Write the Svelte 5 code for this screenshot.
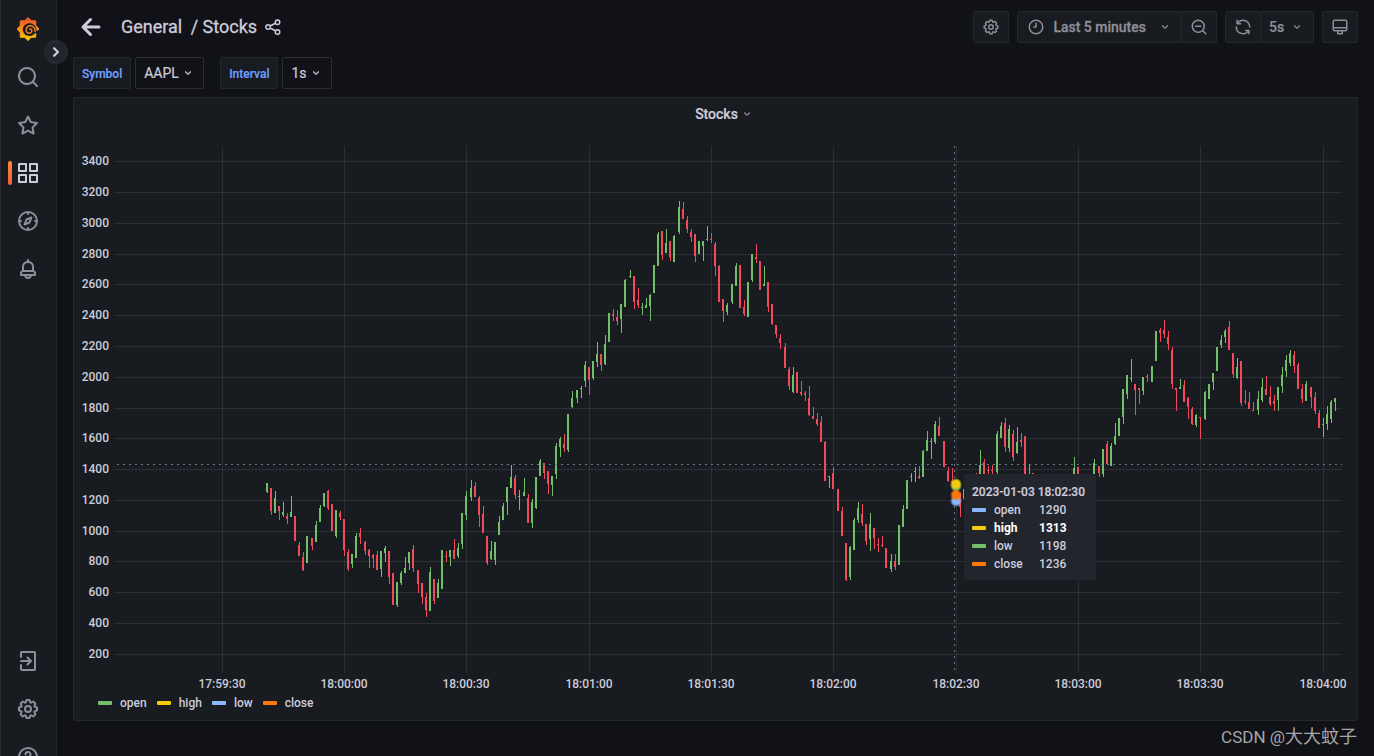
<script>
  const icons = {
    search: 'M21.71,20.29,18,16.61A9,9,0,1,0,16.61,18l3.68,3.68a1,1,0,0,0,1.42,0A1,1,0,0,0,21.71,20.29ZM11,18a7,7,0,1,1,7-7A7,7,0,0,1,11,18Z',
    star: 'M22,9.67A1,1,0,0,0,21.14,9l-5.69-.83L12.9,3a1,1,0,0,0-1.8,0L8.55,8.16,2.86,9a1,1,0,0,0-.81.68,1,1,0,0,0,.25,1l4.13,4-1,5.68A1,1,0,0,0,6.9,21.44L12,18.77l5.1,2.67a.93.93,0,0,0,.46.12,1,1,0,0,0,.59-.19,1,1,0,0,0,.4-1l-1-5.68,4.13-4A1,1,0,0,0,22,9.67Zm-6.15,4a1,1,0,0,0-.29.88l.72,4.2-3.76-2a1.06,1.06,0,0,0-.94,0l-3.76,2,.72-4.2a1,1,0,0,0-.29-.88l-3-3,4.21-.61a1,1,0,0,0,.76-.55L12,5.7l1.88,3.82a1,1,0,0,0,.76.55l4.21.61Z',
    apps: 'M10,13H3a1,1,0,0,0-1,1v7a1,1,0,0,0,1,1h7a1,1,0,0,0,1-1V14A1,1,0,0,0,10,13ZM9,20H4V15H9ZM21,2H14a1,1,0,0,0-1,1v7a1,1,0,0,0,1,1h7a1,1,0,0,0,1-1V3A1,1,0,0,0,21,2ZM20,9H15V4h5Zm1,4H14a1,1,0,0,0-1,1v7a1,1,0,0,0,1,1h7a1,1,0,0,0,1-1V14A1,1,0,0,0,21,13Zm-1,7H15V15h5ZM10,2H3A1,1,0,0,0,2,3v7a1,1,0,0,0,1,1h7a1,1,0,0,0,1-1V3A1,1,0,0,0,10,2ZM9,9H4V4H9Z',
    bell: 'M18,13.18V10a6,6,0,0,0-5-5.91V3a1,1,0,0,0-2,0V4.09A6,6,0,0,0,6,10v3.18A3,3,0,0,0,4,16v2a1,1,0,0,0,1,1H8.14a4,4,0,0,0,7.72,0H19a1,1,0,0,0,1-1V16A3,3,0,0,0,18,13.18ZM8,10a4,4,0,0,1,8,0v3H8Zm4,10a2,2,0,0,1-1.72-1h3.44A2,2,0,0,1,12,20Zm6-3H6V16a1,1,0,0,1,1-1H17a1,1,0,0,1,1,1Z',
    cog: 'M21.32,9.55l-1.89-.63.89-1.78A1,1,0,0,0,20.13,6L18,3.87a1,1,0,0,0-1.15-.19l-1.78.89-.63-1.89A1,1,0,0,0,13.5,2h-3a1,1,0,0,0-.95.68L8.92,4.57,7.14,3.68A1,1,0,0,0,6,3.87L3.87,6a1,1,0,0,0-.19,1.15l.89,1.78-1.89.63A1,1,0,0,0,2,10.5v3a1,1,0,0,0,.68.95l1.89.63-.89,1.78A1,1,0,0,0,3.87,18L6,20.13a1,1,0,0,0,1.15.19l1.78-.89.63,1.89a1,1,0,0,0,.95.68h3a1,1,0,0,0,.95-.68l.63-1.89,1.78.89A1,1,0,0,0,18,20.13L20.13,18a1,1,0,0,0,.19-1.15l-.89-1.78,1.89-.63A1,1,0,0,0,22,13.5v-3A1,1,0,0,0,21.32,9.55ZM20,12.78l-1.2.4A2,2,0,0,0,17.64,16l.57,1.14-1.1,1.1L16,17.64a2,2,0,0,0-2.79,1.16l-.4,1.2H11.22l-.4-1.2A2,2,0,0,0,8,17.64l-1.14.57-1.1-1.1L6.36,16A2,2,0,0,0,5.2,13.18L4,12.78V11.22l1.2-.4A2,2,0,0,0,6.36,8L5.79,6.89l1.1-1.1L8,6.36A2,2,0,0,0,10.82,5.2l.4-1.2h1.56l.4,1.2A2,2,0,0,0,16,6.36l1.14-.57,1.1,1.1L17.64,8a2,2,0,0,0,1.16,2.79l1.2.4ZM12,8a4,4,0,1,0,4,4A4,4,0,0,0,12,8Zm0,6a2,2,0,1,1,2-2A2,2,0,0,1,12,14Z',
    angleDown: 'M17,9.17a1,1,0,0,0-1.41,0L12,12.71,8.46,9.17a1,1,0,0,0-1.41,0,1,1,0,0,0,0,1.42l4.24,4.24a1,1,0,0,0,1.42,0L17,10.59A1,1,0,0,0,17,9.17Z',
    sync: 'M19.91,15.51H15.38a1,1,0,0,0,0,2h2.4A8,8,0,0,1,4,12a1,1,0,0,0-2,0,10,10,0,0,0,16.88,7.23V21a1,1,0,0,0,2,0V16.5A1,1,0,0,0,19.91,15.51ZM12,2A10,10,0,0,0,5.12,4.77V3a1,1,0,0,0-2,0V7.5a1,1,0,0,0,1,1h4.5a1,1,0,0,0,0-2H6.22A8,8,0,0,1,20,12a1,1,0,0,0,2,0A10,10,0,0,0,12,2Z',
  };

  // outlined icons, drawn with a 2px stroke
  const outlines = {
    compass: 'M12 3a9 9 0 1 0 0 18a9 9 0 1 0 0-18ZM12 3v2M12 19v2M3 12h2M19 12h2M15.5 8.5l-2 5l-5 2l2-5Z',
    signin: 'M5 8V4a1 1 0 0 1 1-1h12a1 1 0 0 1 1 1v16a1 1 0 0 1-1 1H6a1 1 0 0 1-1-1v-4M5 12h10M11.5 8.5L15 12l-3.500 3.500',
    help: 'M12 3a9 9 0 1 0 0 18a9 9 0 1 0 0-18ZM9.500 9.500a2.500 2.500 0 1 1 3.500 2.300q-1 .5-1 1.700M12 16.500v.5',
    arrowLeft: 'M20 12H4M11.500 4.500l-7.500 7.500l7.500 7.500',
    angleRight: 'M9.500 7l5 5l-5 5',
    share: 'M18 2.500a3 3 0 1 0 0 6a3 3 0 1 0 0-6ZM5.500 9a3 3 0 1 0 0 6a3 3 0 1 0 0-6ZM18 15.500a3 3 0 1 0 0 6a3 3 0 1 0 0-6ZM8.200 10.700l7-3.700M8.200 13.300l7 3.700',
    clock: 'M12 3a9 9 0 1 0 0 18a9 9 0 1 0 0-18ZM12 7v5H9',
    zoomOut: 'M11 3a8 8 0 1 0 0 16a8 8 0 1 0 0-16ZM17 17l4 4M7.500 11h7',
    monitor: 'M5 3h14a2 2 0 0 1 2 2v10a2 2 0 0 1-2 2H5a2 2 0 0 1-2-2V5a2 2 0 0 1 2-2ZM3 13h18M9 17v4h6v-4',
  };

  const topNav = [
    { name: 'Search', icon: 'search' },
    { name: 'Starred', icon: 'star' },
    { name: 'Dashboards', icon: 'apps', active: true },
    { name: 'Explore', icon: 'compass' },
    { name: 'Alerting', icon: 'bell' },
  ];
  const bottomNav = [
    { name: 'Sign in', icon: 'signin' },
    { name: 'Configuration', icon: 'cog' },
    { name: 'Help', icon: 'help' },
  ];

  const sun = Array.from({ length: 16 }, (_, i) => {
    const r = i % 2 ? 9 : 11.6;
    const a = (i * Math.PI) / 8 - Math.PI / 2;
    return `${12 + r * 0.94 * Math.cos(a)},${13 + r * Math.sin(a)}`;
  }).join(' ');

  const yTicks = Array.from({ length: 17 }, (_, i) => ({ label: 3400 - i * 200, y: Math.round(161.2 + i * 30.79) }));
  const xTicks = ['17:59:30', '18:00:00', '18:00:30', '18:01:00', '18:01:30', '18:02:00', '18:02:30', '18:03:00', '18:03:30', '18:04:00']
    .map((label, i) => ({ label, x: Math.round(221.8 + i * 122.32) }));

  // one candle per second: direction, then high, body top, body bottom, low on the y axis
  const candles = `
    u 483 483 492 493,d 488 488 511 515,u 491 498 513 513,d 506 506 511 520,u 502 512 515 517,d 513 516 519 524,
    u 496 512 517 517,d 516 516 541 541,d 542 545 556 556,d 552 557 570 571,u 536 536 563 563,d 538 538 546 550,
    u 521 525 542 542,u 505 508 522 522,u 493 493 506 507,d 490 491 508 510,d 504 504 531 531,u 510 510 536 538,
    d 511 513 517 520,d 519 519 550 556,d 549 552 569 571,u 554 554 564 568,u 533 536 558 558,d 528 533 537 544,
    d 541 542 551 555,d 549 550 556 568,d 554 555 558 568,d 551 555 570 570,u 551 551 569 577,u 546 548 553 562,
    d 551 551 577 584,d 573 573 605 605,u 582 582 605 607,u 571 573 583 585,u 557 568 573 573,u 552 552 563 570,
    d 545 549 568 572,d 570 570 584 593,d 583 583 597 604,d 593 597 610 617,u 567 572 611 611,d 579 579 601 604,
    u 579 583 598 598,u 550 550 589 589,d 551 556 557 562,u 550 550 557 566,d 539 550 559 559,u 543 548 556 558,
    u 513 513 544 549,u 491 496 515 520,u 480 488 497 501,d 482 486 497 497,d 496 498 515 527,d 506 514 533 533,
    d 536 536 563 565,u 541 551 559 560,u 542 542 560 565,u 516 522 535 535,u 503 506 520 520,u 487 487 502 515,
    u 465 477 488 488,d 475 478 495 499,u 490 496 497 510,u 478 492 496 496,d 494 498 523 523,u 499 502 523 528,
    u 477 477 508 509,u 459 461 476 476,d 463 463 473 479,d 471 471 484 494,u 476 476 485 496,u 443 446 474 479,
    u 437 439 447 457,d 434 444 448 452,u 414 414 450 452,u 391 398 407 408,u 390 390 398 403,u 386 388 389 398,
    u 361 365 381 387,d 367 367 380 395,u 361 361 378 380,u 342 354 362 367,d 354 354 365 371,u 335 344 364 365,
    u 313 313 342 342,d 309 314 316 321,d 310 317 321 325,u 304 304 319 333,u 279 280 307 307,u 270 276 277 278,
    d 276 276 302 309,d 288 300 305 308,u 303 307 308 315,u 298 305 308 308,u 294 295 306 321,u 265 265 293 293,
    u 232 234 266 266,d 231 231 255 260,u 229 243 253 253,d 241 241 257 261,u 235 236 262 262,u 201 207 232 234,
    d 202 209 219 219,d 216 220 229 233,d 229 232 237 242,d 234 234 256 262,u 241 241 254 254,u 241 241 246 261,
    u 226 239 240 241,d 233 239 240 243,d 242 244 266 276,d 265 266 302 302,d 299 299 311 322,u 303 305 312 315,
    u 284 284 302 304,u 263 266 286 286,d 265 265 308 308,d 300 307 314 316,u 282 282 317 317,u 254 254 280 282,
    d 244 257 259 263,d 261 261 290 290,u 266 284 286 286,d 282 282 307 312,d 304 304 324 325,d 325 325 334 338,
    d 334 338 343 349,d 343 347 368 368,d 367 369 386 390,u 367 375 392 393,d 372 372 393 393,d 381 392 394 396,
    d 391 393 395 401,d 386 398 415 416,d 407 416 419 419,d 413 419 424 426,d 416 422 442 442,d 441 442 481 481,
    u 476 476 477 488,d 467 473 489 489,d 489 489 511 511,d 507 511 536 536,d 543 543 580 581,u 546 547 577 580,
    u 518 520 550 550,u 502 508 520 523,d 504 514 523 526,d 524 524 541 545,u 513 524 539 551,d 528 528 538 549,
    d 538 544 545 552,d 536 545 546 547,d 548 548 568 568,u 554 561 569 572,d 554 561 567 570,u 525 525 565 565,
    u 505 509 527 527,u 480 480 509 509,u 473 476 477 482,u 467 471 472 482,d 466 476 478 479,u 450 451 477 477,
    u 431 440 451 451,u 438 441 442 459,u 421 424 442 444,d 417 426 436 436,d 441 441 467 467,d 467 471 481 482,
    d 468 481 482 485,d 483 486 495 501,d 493 496 507 517,u 489 489 499 499,u 485 490 498 500,u 480 484 490 492,
    d 473 476 490 494,u 450 465 480 484,d 459 462 475 480,d 466 470 471 478,d 465 470 471 479,u 431 434 472 474,
    u 422 426 438 438,d 418 423 447 452,u 425 429 448 452,d 430 434 457 461,u 427 442 453 454,d 433 440 442 447,
    d 436 436 476 480,u 465 474 480 484,d 473 473 482 490,d 482 484 495 499,d 494 496 510 512,d 505 508 520 524,
    u 500 505 518 522,d 502 506 516 520,u 498 500 514 518,u 492 495 505 508,d 490 494 500 504,u 480 484 498 500,
    u 457 468 484 488,d 467 467 482 486,d 480 482 492 496,d 484 488 500 503,u 476 480 498 500,u 459 463 474 474,
    d 466 466 473 477,u 449 449 474 477,d 441 444 464 464,u 443 446 466 466,u 423 436 444 445,u 418 418 436 436,
    u 389 389 417 424,u 375 375 394 399,u 359 378 379 382,d 384 384 390 415,d 388 388 390 404,u 377 377 391 395,
    d 374 376 377 382,u 366 366 382 382,u 331 331 361 361,d 328 330 333 342,d 320 330 334 338,d 331 337 344 350,
    d 347 350 384 389,d 388 388 390 411,u 379 387 389 389,d 380 385 402 402,d 397 398 407 419,d 407 409 424 425,
    u 414 415 425 427,d 417 417 418 439,u 391 392 419 420,u 384 384 399 399,u 373 373 382 390,u 347 347 371 371,
    u 335 340 345 348,u 329 331 337 343,d 321 327 350 350,d 353 353 374 378,u 358 367 378 379,d 361 361 403 406,
    d 390 401 402 404,d 392 402 409 409,d 402 410 411 411,u 391 399 410 415,u 378 387 400 402,d 376 389 395 395,
    d 386 397 404 406,d 395 401 404 411,u 387 387 400 411,u 367 375 386 393,u 355 360 371 377,u 350 353 363 366,
    d 351 355 366 373,d 363 365 389 389,d 384 389 399 403,u 381 384 401 401,d 387 387 397 408,d 392 397 411 414,
    d 410 413 428 428,u 418 424 425 437,u 406 414 424 430,u 400 402 419 423,u 398 398 402 411`
    .split(',')
    .map((row, i) => {
      const [dir, high, top, bottom, low] = row.trim().split(' ');
      return { dir, high: +high, top: +top, bottom: +bottom, low: +low, x: Math.floor(266.15 + i * 4.0778) };
    });

  const legend = [
    { name: 'open', color: 'green' },
    { name: 'high', color: 'yellow' },
    { name: 'low', color: 'blue' },
    { name: 'close', color: 'orange' },
  ];
  const hovered = [
    { name: 'open', value: 1290, color: 'blue' },
    { name: 'high', value: 1313, color: 'yellow', active: true },
    { name: 'low', value: 1198, color: 'green' },
    { name: 'close', value: 1236, color: 'orange' },
  ];
</script>

{#snippet icon(name, size, weight = 2)}
  <svg class="icon" width={size} height={size} viewBox="0 0 24 24" aria-hidden="true">
    {#if icons[name]}
      <path d={icons[name]} fill="currentColor" />
    {:else}
      <path d={outlines[name]} fill="none" stroke="currentColor" stroke-width={weight} stroke-linecap="round" stroke-linejoin="round" />
    {/if}
  </svg>
{/snippet}

<div class="app">
  <div class="sidebar-wrap">
    <nav class="sidebar">
      <a class="nav-item" href="/" aria-label="Home">
        <svg width="24" height="26" viewBox="0 0 24 26" aria-hidden="true">
          <defs>
            <linearGradient id="sun" x1="0" y1="0" x2="0" y2="1">
              <stop offset="0.1" stop-color="#f05a28" />
              <stop offset="1" stop-color="#fbca0a" />
            </linearGradient>
          </defs>
          <polygon points={sun} fill="url(#sun)" stroke="url(#sun)" stroke-width="1" stroke-linejoin="round" />
          <path d="M24 15.500L20.500 14.500C20 9.500 16.500 7 13 7.300C8.500 7.700 6.300 11.500 7 15C7.800 18.800 11.500 20.600 15 19.700C17 19.200 18.500 18 19.300 16.800L22.500 19Z" fill="#181b1f" />
          <path d="M19 15.500C19.200 11.500 16.500 9.500 13.800 9.800C10.800 10.200 9.500 13 10.300 15.300C11.200 17.600 14.300 18 15.500 16.200C16.500 14.500 15.300 12.700 13.800 13" fill="none" stroke="#f5801f" stroke-width="1.500" stroke-linecap="round" />
        </svg>
      </a>
      {#each topNav as item}
        <a class="nav-item" class:active={item.active} href="/" aria-label={item.name}>{@render icon(item.icon, 24)}</a>
      {/each}
      <div class="nav-bottom">
        {#each bottomNav as item}
          <a class="nav-item" href="/" aria-label={item.name}>{@render icon(item.icon, 24)}</a>
        {/each}
      </div>
    </nav>
    <button class="expand" aria-label="Expand menu">{@render icon('angleRight', 18, 3)}</button>
  </div>

  <main>
    <header>
      <button class="plain back" aria-label="Go back">{@render icon('arrowLeft', 24, 3)}</button>
      <h1><a href="/">General</a> <span>/ <a href="/">Stocks</a></span></h1>
      <button class="plain" aria-label="Share dashboard">{@render icon('share', 18)}</button>

      <div class="toolbar">
        <button class="tool square" aria-label="Dashboard settings">{@render icon('cog', 18)}</button>
        <div class="group">
          <button class="tool time">{@render icon('clock', 18)}<span>Last 5 minutes</span>{@render icon('angleDown', 14)}</button>
          <button class="tool square" aria-label="Zoom out">{@render icon('zoomOut', 18)}</button>
        </div>
        <div class="group">
          <button class="tool square" aria-label="Refresh">{@render icon('sync', 18)}</button>
          <div class="tool picker">
            <select aria-label="Refresh interval"><option>5s</option></select>
            {@render icon('angleDown', 14)}
          </div>
        </div>
        <button class="tool square" aria-label="Cycle view mode">{@render icon('monitor', 18)}</button>
      </div>
    </header>

    <div class="variables">
      <div class="variable">
        <label for="var-symbol">Symbol</label>
        <div class="picker">
          <select id="var-symbol"><option>AAPL</option></select>
          {@render icon('angleDown', 14)}
        </div>
      </div>
      <div class="variable">
        <label for="var-interval">Interval</label>
        <div class="picker">
          <select id="var-interval"><option>1s</option></select>
          {@render icon('angleDown', 14)}
        </div>
      </div>
    </div>

    <section class="panel">
      <h2><span>Stocks</span><span class="menu">{@render icon('angleDown', 14)}</span></h2>
      <div class="chart">
        <svg viewBox="74 130 1283 562" role="img" aria-label="Candlestick chart of AAPL">
          <g class="grid" shape-rendering="crispEdges">
            {#each yTicks as t}
              <rect x="114" y={t.y} width="1228" height="1" />
            {/each}
            {#each xTicks as t}
              <rect x={t.x} y="146" width="1" height="527" />
            {/each}
          </g>
          <g class="axis">
            {#each yTicks as t}
              <text x="109" y={t.y + 4} text-anchor="end">{t.label}</text>
            {/each}
            {#each xTicks as t}
              <text x={t.x} y="688" text-anchor="middle">{t.label}</text>
            {/each}
          </g>
          <g shape-rendering="crispEdges">
            {#each candles as c}
              <g class={c.dir}>
                <rect x={c.x + 1} y={c.high} width="1" height={c.low - c.high} />
                <rect x={c.x} y={c.top} width="2" height={c.bottom - c.top} />
              </g>
            {/each}
          </g>
          <path class="cursor" d="M954.5 146V673M117 464.5H1342" shape-rendering="crispEdges" />
          <circle class="point green" cx="956" cy="486" r="4" />
          <circle class="point yellow" cx="956" cy="484" r="4" />
          <circle class="point blue" cx="956" cy="501" r="4" />
          <circle class="point orange" cx="956" cy="495" r="4" />
        </svg>
        <div class="tooltip">
          <div class="stamp">2023-01-03 18:02:30</div>
          {#each hovered as s}
            <div class="row" class:strong={s.active}>
              <i class="swatch {s.color}"></i><span class="name">{s.name}</span><span>{s.value}</span>
            </div>
          {/each}
        </div>
      </div>
      <div class="legend">
        {#each legend as s}
          <button class="series"><i class="swatch {s.color}"></i>{s.name}</button>
        {/each}
      </div>
    </section>
  </main>

  <div class="watermark">CSDN @<span>大大蚊子</span></div>
</div>

<style>
  :global(body) {
    background: #111217;
  }
  .app {
    position: relative;
    display: flex;
    height: 100vh;
    overflow: hidden;
    color: #ccccdc;
    font: 14px/20px Roboto, "Noto Sans CJK SC", sans-serif;
  }
  .app * {
    box-sizing: border-box;
  }
  a {
    color: inherit;
    text-decoration: none;
  }
  button,
  select {
    margin: 0;
    padding: 0;
    border: 0;
    background: none;
    color: inherit;
    font: inherit;
  }
  .icon {
    display: block;
    flex: none;
  }

  .sidebar-wrap {
    position: relative;
    flex: none;
    width: 57px;
  }
  .sidebar {
    display: flex;
    flex-direction: column;
    height: 100%;
    padding: 5px 1px 0 0;
    overflow: hidden;
    background: #181b1f;
    border-left: 1px solid #2a2c30;
    border-right: 1px solid #24272b;
    color: #8d8e99;
  }
  .nav-item {
    position: relative;
    display: flex;
    flex: none;
    align-items: center;
    justify-content: center;
    height: 48px;
  }
  .nav-item.active {
    color: #ccccdc;
  }
  .nav-item.active::before {
    content: '';
    position: absolute;
    left: 7px;
    width: 4px;
    height: 24px;
    border-radius: 2px;
    background: linear-gradient(#ff8833, #f55f3e);
  }
  .nav-bottom {
    margin-top: auto;
    margin-bottom: -25px;
  }
  .expand {
    position: absolute;
    top: 40px;
    right: -11px;
    z-index: 1;
    display: flex;
    align-items: center;
    justify-content: center;
    width: 24px;
    height: 24px;
    border: 1px solid #2c2f35;
    border-radius: 50%;
    background: #22252b;
  }

  main {
    flex: 1;
    min-width: 0;
    padding: 0 16px;
  }
  header {
    display: flex;
    align-items: center;
    height: 54px;
    padding-left: 6px;
  }
  .back {
    margin-right: 18px;
  }
  h1 {
    margin: 0 7px 0 0;
    font-size: 18px;
    font-weight: 400;
    line-height: 24px;
    -webkit-text-stroke: 0.3px;
  }
  h1 > span {
    margin-left: 4px;
  }
  .toolbar {
    display: flex;
    gap: 8px;
    margin-left: auto;
  }
  .group {
    display: flex;
  }
  .tool {
    display: flex;
    align-items: center;
    height: 32px;
    border: 1px solid #24272b;
    border-radius: 2px;
    background: #181b1f;
    color: #8d8e99;
    font-weight: 500;
    -webkit-text-stroke: 0.3px;
  }
  .group .tool + .tool {
    margin-left: -1px;
  }
  .square {
    justify-content: center;
    width: 36px;
  }
  .time {
    gap: 8px;
    padding: 0 9px;
  }
  .time span {
    margin-right: 4px;
  }

  .variables {
    display: flex;
    gap: 16px;
    padding: 3px 0 8px;
  }
  .variable {
    display: flex;
    gap: 4px;
  }
  .variable label {
    height: 32px;
    padding: 0 8px;
    border: 1px solid #24272b;
    border-radius: 2px;
    background: #181b1f;
    color: #6e9fff;
    font-size: 12px;
    font-weight: 500;
    line-height: 32px;
    -webkit-text-stroke: 0.2px;
  }
  .picker {
    position: relative;
    display: flex;
    align-items: center;
    height: 32px;
    padding-right: 8px;
    border: 1px solid #2c2e33;
    border-radius: 2px;
  }
  .picker select {
    height: 30px;
    padding: 0 16px 0 8px;
    margin-right: -14px;
    appearance: none;
    -webkit-text-stroke: 0.2px;
  }
  .tool.picker {
    border-color: #24272b;
    padding-right: 9px;
  }
  .tool.picker select {
    padding-right: 19px;
  }
  .picker :global(.icon) {
    pointer-events: none;
  }

  .panel {
    border: 1px solid #24272b;
    border-radius: 2px;
    background: #181b1f;
    padding-bottom: 6px;
  }
  h2 {
    display: flex;
    align-items: center;
    justify-content: center;
    gap: 2px;
    height: 32px;
    margin: 0;
    padding-left: 18px;
    font-size: 14px;
    font-weight: 500;
    -webkit-text-stroke: 0.2px;
  }
  .menu {
    color: #8d8e99;
  }
  .chart {
    position: relative;
  }
  .chart svg {
    display: block;
    width: 100%;
  }
  .grid {
    fill: rgba(240, 250, 255, 0.09);
  }
  .axis {
    fill: #ccccdc;
    font-size: 12px;
    font-weight: 500;
  }
  .u {
    fill: #73bf69;
  }
  .d {
    fill: #f2495c;
  }
  .cursor {
    fill: none;
    stroke: #607d8b;
    stroke-dasharray: 2 4;
  }
  .point {
    stroke-width: 3px;
    stroke-opacity: 0.5;
  }
  .green {
    background: #73bf69;
    fill: #73bf69;
    stroke: #73bf69;
  }
  .yellow {
    background: #f2cc0c;
    fill: #f2cc0c;
    stroke: #f2cc0c;
  }
  .blue {
    background: #8ab8ff;
    fill: #8ab8ff;
    stroke: #8ab8ff;
  }
  .orange {
    background: #ff780a;
    fill: #ff780a;
    stroke: #ff780a;
  }
  .swatch {
    flex: none;
    width: 14px;
    height: 4px;
    margin-right: 8px;
    border-radius: 1px;
  }
  .tooltip {
    position: absolute;
    left: 890px;
    top: 344px;
    width: 132px;
    padding: 9px 8px 7px;
    border-radius: 2px;
    background: #22252b;
    font-size: 12px;
    font-weight: 500;
    line-height: 18px;
    white-space: nowrap;
  }
  .stamp {
    -webkit-text-stroke: 0.2px;
  }
  .row {
    display: flex;
    align-items: center;
  }
  .name {
    width: 45px;
  }
  .strong {
    color: #fff;
    font-weight: 700;
  }
  .legend {
    display: flex;
    gap: 10px;
    padding-left: 24px;
  }
  .series {
    display: flex;
    align-items: center;
    height: 22px;
    font-size: 12px;
    font-weight: 500;
  }

  .watermark {
    position: absolute;
    right: 17px;
    bottom: 7px;
    color: #a6a6a8;
    font-size: 17px;
    line-height: 24px;
  }
  .watermark span {
    font-size: 18px;
  }
</style>
